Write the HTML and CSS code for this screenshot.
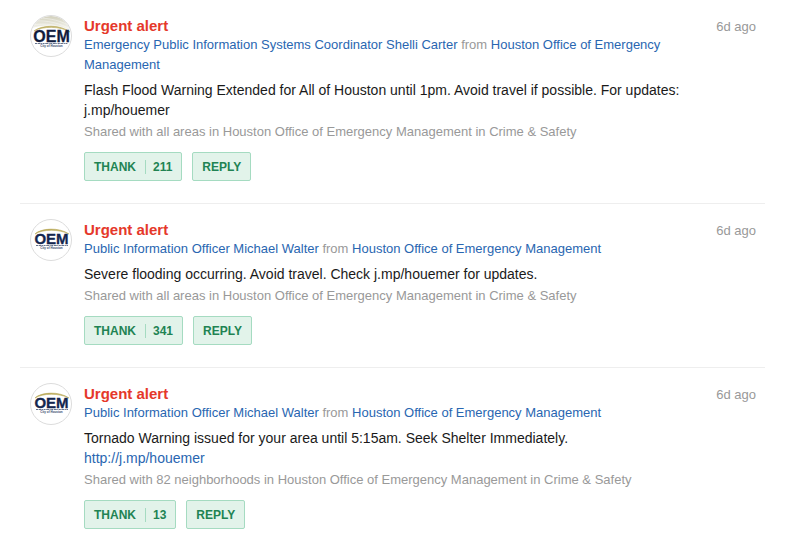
FILE: index.html
```html
<!doctype html>
<html lang="en">
<head>
	<meta charset="UTF-8" />
	<title>Urgent alerts</title>
	<link rel="stylesheet" href="styles.css">
</head>
<body>
	<!-- shared parts of the OEM logo -->
	<svg class="defs" width="0" height="0" aria-hidden="true">
		<defs>
			<linearGradient id="gold" x1="0" y1="0" x2="1" y2="0">
				<stop offset="0" stop-color="#b5a24a"/>
				<stop offset="1" stop-color="#d2c68a"/>
			</linearGradient>
			<linearGradient id="haze" x1="0" y1="0" x2="0" y2="1">
				<stop offset="0" stop-color="#cfcdb8"/>
				<stop offset="1" stop-color="#fbfbf8"/>
			</linearGradient>
			<clipPath id="round"><circle cx="21" cy="21" r="20"/></clipPath>
			<g id="oem">
				<path d="M5 15 C11 9 29 8 39 15 C29 10 13 10 5 15Z" fill="url(#gold)" stroke="#b9a95a" stroke-width=".6"/>
				<text class="logo-name" x="21.5" y="25" text-anchor="middle">OEM</text>
				<path d="M6 26.5H38" stroke="#68738c" stroke-width="1" stroke-dasharray="2 .6 3 .5 1 .5"/>
				<text class="logo-city" x="21.5" y="30" text-anchor="middle">City of Houston</text>
			</g>
		</defs>
	</svg>

	<main class="feed">
		<article class="post">
			<svg class="avatar" viewBox="0 0 42 42" role="img" aria-label="OEM">
				<circle cx="21" cy="21" r="20" fill="#fff"/>
				<g clip-path="url(#round)">
					<path d="M0 0H42V16C30 10 14 8 0 14Z" fill="url(#haze)"/>
					<path d="M4 6C17 5 30 8 42 15M8 3C20 3 32 6 42 12M2 10C15 8 28 9 42 17" fill="none" stroke="#fff" stroke-opacity=".5" stroke-width=".8"/>
				</g>
				<path d="M4 16 C11 10 30 9 40 17 C30 11 13 11 4 16Z" fill="url(#gold)" stroke="#b9a95a" stroke-width=".6"/>
				<text class="logo-name large" x="21.5" y="27" text-anchor="middle">OEM</text>
				<path d="M5 28.5H38" stroke="#68738c" stroke-width="1" stroke-dasharray="2 .6 3 .5 1 .5"/>
				<text class="logo-city" x="21.5" y="32" text-anchor="middle">City of Houston</text>
				<circle cx="21" cy="21" r="20.5" fill="none" stroke="#dcdcdc"/>
			</svg>
			<div class="content">
				<h2>Urgent alert</h2>
				<p class="byline"><a href="#">Emergency Public Information Systems Coordinator Shelli Carter</a> from <a href="#">Houston Office of Emergency Management</a></p>
				<p class="message">Flash Flood Warning Extended for All of Houston until 1pm. Avoid travel if possible. For updates: j.mp/houemer</p>
				<p class="shared">Shared with all areas in Houston Office of Emergency Management in Crime &amp; Safety</p>
				<div class="actions">
					<button type="button">THANK<span class="count">211</span></button>
					<button type="button">REPLY</button>
				</div>
			</div>
			<time>6d ago</time>
		</article>

		<article class="post">
			<svg class="avatar" viewBox="0 0 42 42" role="img" aria-label="OEM">
				<circle cx="21" cy="21" r="20.5" fill="#fff" stroke="#dcdcdc"/>
				<use href="#oem"/>
			</svg>
			<div class="content">
				<h2>Urgent alert</h2>
				<p class="byline"><a href="#">Public Information Officer Michael Walter</a> from <a href="#">Houston Office of Emergency Management</a></p>
				<p class="message">Severe flooding occurring. Avoid travel. Check j.mp/houemer for updates.</p>
				<p class="shared">Shared with all areas in Houston Office of Emergency Management in Crime &amp; Safety</p>
				<div class="actions">
					<button type="button">THANK<span class="count">341</span></button>
					<button type="button">REPLY</button>
				</div>
			</div>
			<time>6d ago</time>
		</article>

		<article class="post">
			<svg class="avatar" viewBox="0 0 42 42" role="img" aria-label="OEM">
				<circle cx="21" cy="21" r="20.5" fill="#fff" stroke="#dcdcdc"/>
				<use href="#oem"/>
			</svg>
			<div class="content">
				<h2>Urgent alert</h2>
				<p class="byline"><a href="#">Public Information Officer Michael Walter</a> from <a href="#">Houston Office of Emergency Management</a></p>
				<p class="message">Tornado Warning issued for your area until 5:15am. Seek Shelter Immediately.<br><a href="#">http://j.mp/houemer</a></p>
				<p class="shared">Shared with 82 neighborhoods in Houston Office of Emergency Management in Crime &amp; Safety</p>
				<div class="actions">
					<button type="button">THANK<span class="count">13</span></button>
					<button type="button">REPLY</button>
				</div>
			</div>
			<time>6d ago</time>
		</article>
	</main>
</body>
</html>
```

FILE: styles.css
```css
*{
	margin: 0;
	padding: 0;
	box-sizing: border-box;
}
body{
	background: #fff;
	font-family: "Liberation Sans", Arial, sans-serif;
	font-size: 13px;
	line-height: 20px;
	color: #999;
}
a{
	color: #2966b1;
	text-decoration: none;
}
.defs{
	position: absolute;
}
.feed{
	padding: 0 27px 0 20px;
}
.post{
	display: flex;
	align-items: flex-start;
	padding: 15px 9px 22px;
}
.post + .post{
	border-top: 1px solid #eee;
}

/* avatar */
.avatar{
	flex: none;
	width: 42px;
	height: 42px;
	margin: 0 12px 0 1px;
}
.logo-name{
	font-size: 15px;
	font-weight: bold;
	fill: #14264f;
	stroke: #14264f;
	stroke-width: .3px;
}
.logo-name.large{
	font-size: 16px;
	fill: #111b3a;
}
.logo-city{
	font-size: 3px;
	font-weight: bold;
	fill: #34456b;
}

.content{
	flex: 1;
	padding-right: 32px;
}
h2{
	padding-top: 1px;
	font-size: 15px;
	line-height: 19px;
	color: #e5382a;
}
.message{
	margin: 5px 0 2px;
	font-size: 14px;
	color: #1a1a1a;
}
time{
	flex: none;
	padding-top: 2px;
}

/* buttons */
.actions{
	display: flex;
	gap: 10px;
	margin-top: 10px;
}
button{
	display: flex;
	align-items: center;
	height: 29px;
	padding: 0 9px;
	border: 1px solid #a5dbc1;
	border-radius: 2px;
	background: #e2f3ea;
	font-family: inherit;
	font-size: 12px;
	font-weight: bold;
	color: #218353;
}
.count{
	margin-left: 9px;
	padding-left: 7px;
	border-left: 1px solid #a5dbc1;
}
```
